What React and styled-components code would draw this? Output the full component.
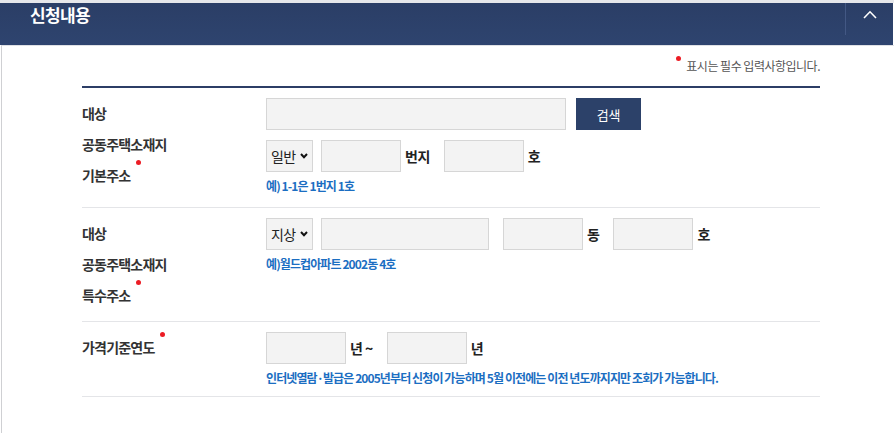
import React from "react";
import styled, { createGlobalStyle } from "styled-components";

const GlobalStyle = createGlobalStyle`
  html, body { margin: 0; padding: 0; background: #ffffff; }
  body { font-family: "Noto Sans CJK KR", "Noto Sans", sans-serif; color: #333; }
  * { box-sizing: border-box; }
`;

const Page = styled.div`
  border-top: 3px solid #e6e7ea;
  min-height: 100vh;
  display: flex;
  flex-direction: column;
`;

const Header = styled.div`
  height: 42px;
  background: linear-gradient(#2b3e66, #2e446f);
  display: flex;
  align-items: flex-start;
  justify-content: space-between;
  margin-right: 1px;
`;

const Title = styled.h2`
  margin: 0;
  padding: 0 0 0 30px;
  font-size: 17px;
  line-height: 24px;
  font-weight: 700;
  letter-spacing: -0.6px;
  color: #ffffff;
`;

const Toggle = styled.button`
  width: 48px;
  height: 32px;
  border: 0;
  border-left: 1px solid #435884;
  background: transparent;
  padding: 7px 0 0;
  display: flex;
  justify-content: center;
  align-items: flex-start;
  cursor: pointer;
`;

const Body = styled.div`
  flex: 1;
  margin-left: 1px;
  border-left: 1px solid #cfd0d3;
  border-top: 1px solid #dfe1e5;
  padding: 0 74px 0 80px;
`;

const Note = styled.p`
  margin: 0;
  padding-top: 10px;
  display: flex;
  justify-content: flex-end;
  font-size: 12px;
  line-height: 20px;
  letter-spacing: -0.5px;
  color: #555;
`;

const Dot = styled.span`
  display: inline-block;
  width: 5px;
  height: 5px;
  border-radius: 50%;
  background: #ec1c24;
  vertical-align: top;
  margin: ${(p) => (p.$before ? "0 5px 0 0" : "0 0 0 6px")};
`;

const Form = styled.div`
  margin-top: 10px;
  border-top: 2px solid #2c3e66;
`;

const Row = styled.div`
  display: flex;
  padding: 10px 0 ${(p) => p.$pb || 10}px;
  border-bottom: 1px solid #e4e5e8;
`;

const Label = styled.div`
  width: 184px;
  flex: none;
  font-size: 14px;
  font-weight: 700;
  line-height: 31px;
  letter-spacing: -0.8px;
  color: #333;
`;

const LabelLine = styled.div`
  white-space: nowrap;
`;

const Controls = styled.div`
  display: flex;
  flex-direction: column;
`;

const Line = styled.div`
  display: flex;
  align-items: center;
  gap: 8px;
  & + & { margin-top: 10px; }
`;

const Field = styled.input`
  width: ${(p) => p.$w}px;
  height: 32px;
  margin-right: ${(p) => p.$mr || 0}px;
  background: #f3f3f3;
  border: 1px solid #d6d6d6;
  padding: 0 8px;
  font-family: inherit;
  font-size: 13px;
  outline: none;
`;

const SelectBox = styled.div`
  position: relative;
  width: 47px;
  height: 32px;
  flex: none;
`;

const Select = styled.select`
  appearance: none;
  -webkit-appearance: none;
  width: 100%;
  height: 100%;
  background-color: #f3f3f3;
  border: 1px solid #d6d6d6;
  border-radius: 0;
  padding: 0 0 0 4px;
  font-family: "Noto Sans CJK KR", sans-serif;
  font-size: 14px;
  letter-spacing: -0.6px;
  color: #222;
  outline: none;
`;

const SelectArrow = styled.svg`
  position: absolute;
  right: 5px;
  top: 13px;
  pointer-events: none;
`;

const SearchButton = styled.button`
  width: 65px;
  height: 32px;
  margin-left: 2px;
  border: 0;
  background: #2c4169;
  color: #ffffff;
  font-family: inherit;
  font-size: 13px;
  letter-spacing: -0.3px;
  cursor: pointer;
`;

const Unit = styled.span`
  margin: 0 6px 0 -4px;
  font-size: 14px;
  font-weight: 700;
  letter-spacing: -0.5px;
  color: #222;
  white-space: nowrap;
`;

const Hint = styled.p`
  margin: 6px 0 0;
  font-size: 12px;
  line-height: 16px;
  font-weight: 700;
  letter-spacing: -0.9px;
  color: #1b6ec2;
  white-space: nowrap;
`;

function Chevron() {
  return (
    <svg width="14" height="9" viewBox="0 0 14 9" fill="none">
      <path d="M1 8 L7 1.8 L13 8" stroke="#ffffff" strokeWidth="1.6" />
    </svg>
  );
}

function Dropdown({ value, options }) {
  return (
    <SelectBox>
      <Select defaultValue={value}>
        {options.map((o) => (
          <option key={o}>{o}</option>
        ))}
      </Select>
      <SelectArrow width="8" height="6" viewBox="0 0 8 6" fill="none">
        <path d="M1 1 L4 4.2 L7 1" stroke="#111" strokeWidth="2" />
      </SelectArrow>
    </SelectBox>
  );
}

export default function App() {
  return (
    <>
      <GlobalStyle />
      <Page>
        <Header>
          <Title>신청내용</Title>
          <Toggle aria-label="접기">
            <Chevron />
          </Toggle>
        </Header>
        <Body>
          <Note>
            <Dot $before />
            표시는 필수 입력사항입니다.
          </Note>
          <Form>
            <Row $pb={13}>
              <Label>
                <LabelLine>대상</LabelLine>
                <LabelLine>공동주택소재지</LabelLine>
                <LabelLine>
                  기본주소
                  <Dot />
                </LabelLine>
              </Label>
              <Controls>
                <Line>
                  <Field $w={300} />
                  <SearchButton>검색</SearchButton>
                </Line>
                <Line>
                  <Dropdown value="일반" options={["일반", "산"]} />
                  <Field $w={80} />
                  <Unit>번지</Unit>
                  <Field $w={80} />
                  <Unit>호</Unit>
                </Line>
                <Hint>예) 1-1은 1번지 1호</Hint>
              </Controls>
            </Row>
            <Row>
              <Label>
                <LabelLine>대상</LabelLine>
                <LabelLine>공동주택소재지</LabelLine>
                <LabelLine>
                  특수주소
                  <Dot />
                </LabelLine>
              </Label>
              <Controls>
                <Line>
                  <Dropdown value="지상" options={["지상", "지하"]} />
                  <Field $w={168} $mr={6} />
                  <Field $w={80} />
                  <Unit>동</Unit>
                  <Field $w={80} />
                  <Unit>호</Unit>
                </Line>
                <Hint>예)월드컵아파트 2002동 4호</Hint>
              </Controls>
            </Row>
            <Row>
              <Label>
                <LabelLine>
                  가격기준연도
                  <Dot />
                </LabelLine>
              </Label>
              <Controls>
                <Line>
                  <Field $w={80} />
                  <Unit>년 ~</Unit>
                  <Field $w={80} />
                  <Unit>년</Unit>
                </Line>
                <Hint>
                  인터넷열람·발급은 2005년부터 신청이 가능하며 5월 이전에는 이전 년도까지지만 조회가 가능합니다.
                </Hint>
              </Controls>
            </Row>
          </Form>
        </Body>
      </Page>
    </>
  );
}
